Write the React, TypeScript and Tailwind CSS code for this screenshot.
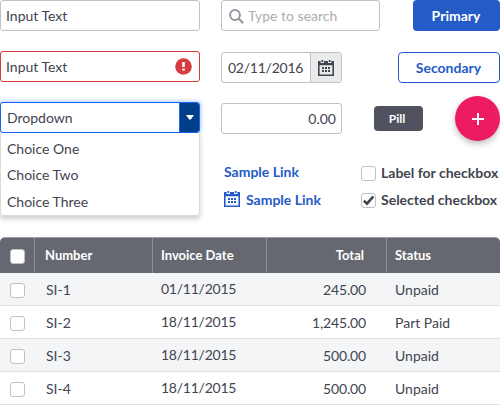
import React from "react";

function CalendarIcon() {
  return (
    <svg width="16" height="16" viewBox="0 0 16 16" fill="currentColor">
      <path fillRule="evenodd" d="M0 1h2.6v2h3.4V1h4v2h3.4V1H16v15H0V1zm1.6 4.3v9.1h12.8V5.3H1.6z" />
      <path d="M3.4 0h1.8v2H3.4zM10.8 0h1.8v2h-1.8z" />
      <path d="M4 7h2v2H4zM7 7h2v2H7zM10 7h2v2h-2zM4 10h2v2H4zM7 10h2v2H7zM10 10h2v2h-2z" />
    </svg>
  );
}

function Box({ checked = false }: { checked?: boolean }) {
  return (
    <span className="flex h-[15px] w-[15px] shrink-0 items-center justify-center rounded-[3px] border border-[#bfc1c5] bg-white">
      {checked && (
        <svg width="11" height="11" viewBox="0 0 11 11" fill="none" stroke="#414550" strokeWidth="2.6">
          <path d="M.8 5.8 4 8.7 10.4 1.4" />
        </svg>
      )}
    </span>
  );
}

const rows = [
  ["SI-1", "01/11/2015", "245.00", "Unpaid"],
  ["SI-2", "18/11/2015", "1,245.00", "Part Paid"],
  ["SI-3", "18/11/2015", "500.00", "Unpaid"],
  ["SI-4", "18/11/2015", "500.00", "Unpaid"],
];

const field = "flex h-[31px] items-center rounded-[3px] border border-[#bfc1c5] bg-white";

export default function App() {
  return (
    <div className="h-[405px] w-[500px] overflow-hidden bg-white font-['Lato',sans-serif] text-[14px] leading-[18px] text-[#414550]">
      <div className="flex h-[237px] gap-[21px]">
        <div className="w-[200px]">
          <div className={`${field} pl-[5px]`}>Input Text</div>
          <div className="mt-5 flex h-[31px] items-center justify-between rounded-[3px] border border-[#d73c3f] pr-[7px] pl-[5px]">
            Input Text
            <svg width="17" height="17" viewBox="0 0 17 17">
              <circle cx="8.5" cy="8.5" r="8.3" fill="#d73c3f" />
              <path d="M7.2 4h2.6v5H7.2zM7.2 10.5h2.6v2H7.2z" fill="#fff" />
            </svg>
          </div>
          <div className="mt-5 flex h-[31px] items-center justify-between overflow-hidden rounded-[3px] border border-[#1963f6] bg-white pl-[6px] shadow-[0_0_5px_#1963f680]">
            Dropdown
            <span className="flex h-full w-5 items-center justify-center border-l border-[#1963f6] bg-[#003f87]">
              <svg width="8" height="5" viewBox="0 0 8 5" fill="#fff">
                <path d="M0 0h8L4.8 4.5H3.2z" />
              </svg>
            </span>
          </div>
          <ul className="h-[83px] rounded-b-[3px] border border-t-0 border-[#d9dadd] bg-white pt-[3px] pl-[6px] leading-[26px] shadow-[0_3px_5px_#00000033]">
            <li>Choice One</li>
            <li>Choice Two</li>
            <li className="pt-px">Choice Three</li>
          </ul>
        </div>

        <div className="w-[279px]">
          <div className="flex justify-between">
            <div className={`${field} w-[159px] gap-1 pl-[7px] text-[#aaadb4]`}>
              <svg width="15" height="15" viewBox="0 0 15 15" fill="none" stroke="#9598a0" className="mt-[2px]">
                <circle cx="6" cy="6" r="4.9" strokeWidth="2" />
                <path d="m9.5 9.5 4.6 4.6" strokeWidth="2.2" />
              </svg>
              Type to search
            </div>
            <button className="h-[31px] w-[87px] rounded-[4px] bg-[#255bc7] pr-px text-[14px] font-bold text-white">Primary</button>
          </div>
          <div className="mt-[21px] flex justify-between">
            <div className={`${field} w-[121px] justify-between overflow-hidden pl-[6px] tracking-[-0.25px]`}>
              02/11/2016
              <span className="flex h-full w-[31px] items-center justify-center border-l border-[#bfc1c5] bg-[#e9eaec]">
                <CalendarIcon />
              </span>
            </div>
            <button className="h-[31px] w-[102px] rounded-[4px] border border-[#255bc7] pr-px text-[14px] font-bold text-[#255bc7]">Secondary</button>
          </div>
          <div className="mt-[13px] flex h-[45px] items-center">
            <div className={`${field} w-[121px] justify-end pr-[5px]`}>0.00</div>
            <span className="ml-8 flex h-[25px] w-[49px] items-center justify-center rounded-[4px] bg-[#50535f] pr-[3px] text-[12px] font-bold text-white">Pill</span>
            <button className="ml-8 flex h-[45px] w-[45px] items-center justify-center rounded-full bg-[#ed1b60] shadow-[0_3px_6px_#00000040]">
              <svg width="12" height="12" viewBox="0 0 12 12" stroke="#fff" strokeWidth="2">
                <path d="M6 0v12M0 6h12" />
              </svg>
            </button>
          </div>
          <div className="mt-[22px] flex">
            <div className="w-[140px] pl-[3px] font-bold text-[#255bc7]">
              <a className="block">Sample Link</a>
              <a className="mt-[10px] flex items-center gap-[6px]">
                <span className="-mt-[2px]"><CalendarIcon /></span>
                Sample Link
              </a>
            </div>
            <div className="flex flex-col gap-[9px] pt-px font-bold whitespace-nowrap">
              <label className="flex items-center gap-[5px]"><Box />Label for checkbox</label>
              <label className="flex items-center gap-[5px]"><Box checked />Selected checkbox</label>
            </div>
          </div>
        </div>
      </div>

      <table className="w-full table-fixed border-separate border-spacing-0">
        <colgroup>
          <col className="w-[35px]" />
          <col className="w-[118px]" />
          <col className="w-[114px]" />
          <col className="w-[120px]" />
          <col className="w-[113px]" />
        </colgroup>
        <thead>
          <tr className="h-[36px] text-left text-[13px] text-white">
            <th className="rounded-tl-[5px] border-t border-r border-t-[#9b9ea6] border-r-[#8d9098] bg-[#656871] p-0 pt-[2px] pl-[10px]"><Box /></th>
            <th className="border-t border-r border-t-[#9b9ea6] border-r-[#8d9098] bg-[#656871] p-0 pb-[2px] pl-[10px]">Number</th>
            <th className="border-t border-r border-t-[#9b9ea6] border-r-[#8d9098] bg-[#656871] p-0 pb-[2px] pl-[8px]">Invoice Date</th>
            <th className="border-t border-r border-t-[#9b9ea6] border-r-[#8d9098] bg-[#656871] p-0 pr-[22px] pb-[2px] text-right">Total</th>
            <th className="rounded-tr-[5px] border-t border-t-[#9b9ea6] bg-[#656871] p-0 pb-[2px] pl-[8px]">Status</th>
          </tr>
        </thead>
        <tbody>
          {rows.map(([number, date, total, status]) => (
            <tr key={number} className="h-[33px] odd:bg-[#f4f5f7]">
              <td className="border-b border-[#dfe0e3] p-0 pt-[2px] pl-[10px]"><Box /></td>
              <td className="border-b border-[#dfe0e3] p-0 pt-[2px] pl-[11px]">{number}</td>
              <td className="border-b border-[#dfe0e3] p-0 pl-[8px] tracking-[-0.25px]">{date}</td>
              <td className="border-b border-[#dfe0e3] p-0 pt-[2px] pr-[21px] text-right tracking-[-0.15px]">{total}</td>
              <td className="border-b border-[#dfe0e3] p-0 pt-[2px] pl-[8px]">{status}</td>
            </tr>
          ))}
        </tbody>
      </table>
    </div>
  );
}
